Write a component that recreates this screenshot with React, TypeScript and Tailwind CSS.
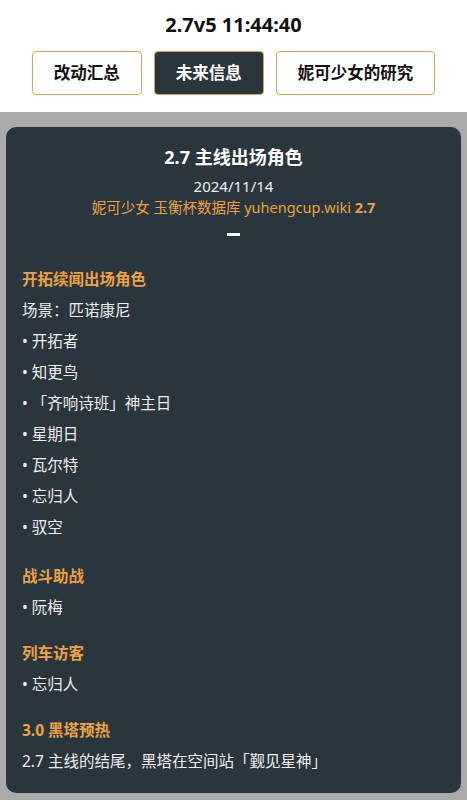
import React from "react";

type Section = { title: string; rows: string[] };

const sections: Section[] = [
  {
    title: "开拓续闻出场角色",
    rows: ["场景：匹诺康尼", "• 开拓者", "• 知更鸟", "• 「齐响诗班」神主日", "• 星期日", "• 瓦尔特", "• 忘归人", "• 驭空"],
  },
  { title: "战斗助战", rows: ["• 阮梅"] },
  { title: "列车访客", rows: ["• 忘归人"] },
  { title: "3.0 黑塔预热", rows: ["2.7 主线的结尾，黑塔在空间站「觐见星神」"] },
];

const tabs = [
  { label: "改动汇总", active: false },
  { label: "未来信息", active: true },
  { label: "妮可少女的研究", active: false },
];

const gaps = ["pt-0", "pt-[18px]", "pt-[15px]", "pt-[15px]"];

export default function App() {
  return (
    <div className="min-h-[800px] bg-[#aaaaaa] font-['Noto_Sans','Noto_Sans_CJK_SC',sans-serif]">
      <header className="bg-white h-[112px] pt-[12px] flex flex-col items-center">
        <div className="h-[26px] leading-[26px] text-[20px] font-bold text-[#111]">2.7v5 11:44:40</div>
        <div className="mt-[13px] flex gap-3">
          {tabs.map((t) => (
            <button
              key={t.label}
              className={
                t.active
                  ? "h-[44px] px-[21px] rounded-[4px] border-[1.5px] border-[#e3a04e] bg-[#29363d] text-white text-[16.5px] font-bold"
                  : "h-[44px] px-[21px] rounded-[4px] border-[1.5px] border-[#e3a04e] bg-white text-[#111] text-[16.5px] font-bold"
              }
            >
              {t.label}
            </button>
          ))}
        </div>
      </header>

      <main className="px-[6px] pt-[15px]">
        <div className="bg-[#29363d] rounded-[10px] pt-[18px] pb-[16px] px-4 text-[#eeeeee]">
          <div className="flex flex-col items-center">
            <div className="h-[24px] leading-[24px] text-[18px] font-bold text-white">2.7 主线出场角色</div>
            <div className="mt-[7px] h-[21px] leading-[21px] text-[15px]">2024/11/14</div>
            <div className="h-[21px] leading-[21px] text-[14.5px] text-[#eea23f]">
              妮可少女 玉衡杯数据库 yuhengcup.wiki <span className="font-bold">2.7</span>
            </div>
            <div className="mt-[15px] w-[13px] h-[3px] bg-white" />
          </div>

          <div className="mt-[28px]">
            {sections.map((s, i) => (
              <div key={s.title} className={gaps[i]}>
                <div className="h-[31px] leading-[31px] text-[15.5px] font-bold text-[#eea23f]">{s.title}</div>
                {s.rows.map((r) => (
                  <div key={r} className="h-[31px] leading-[31px] text-[15.5px]">
                    {r}
                  </div>
                ))}
              </div>
            ))}
          </div>
        </div>
      </main>
    </div>
  );
}
